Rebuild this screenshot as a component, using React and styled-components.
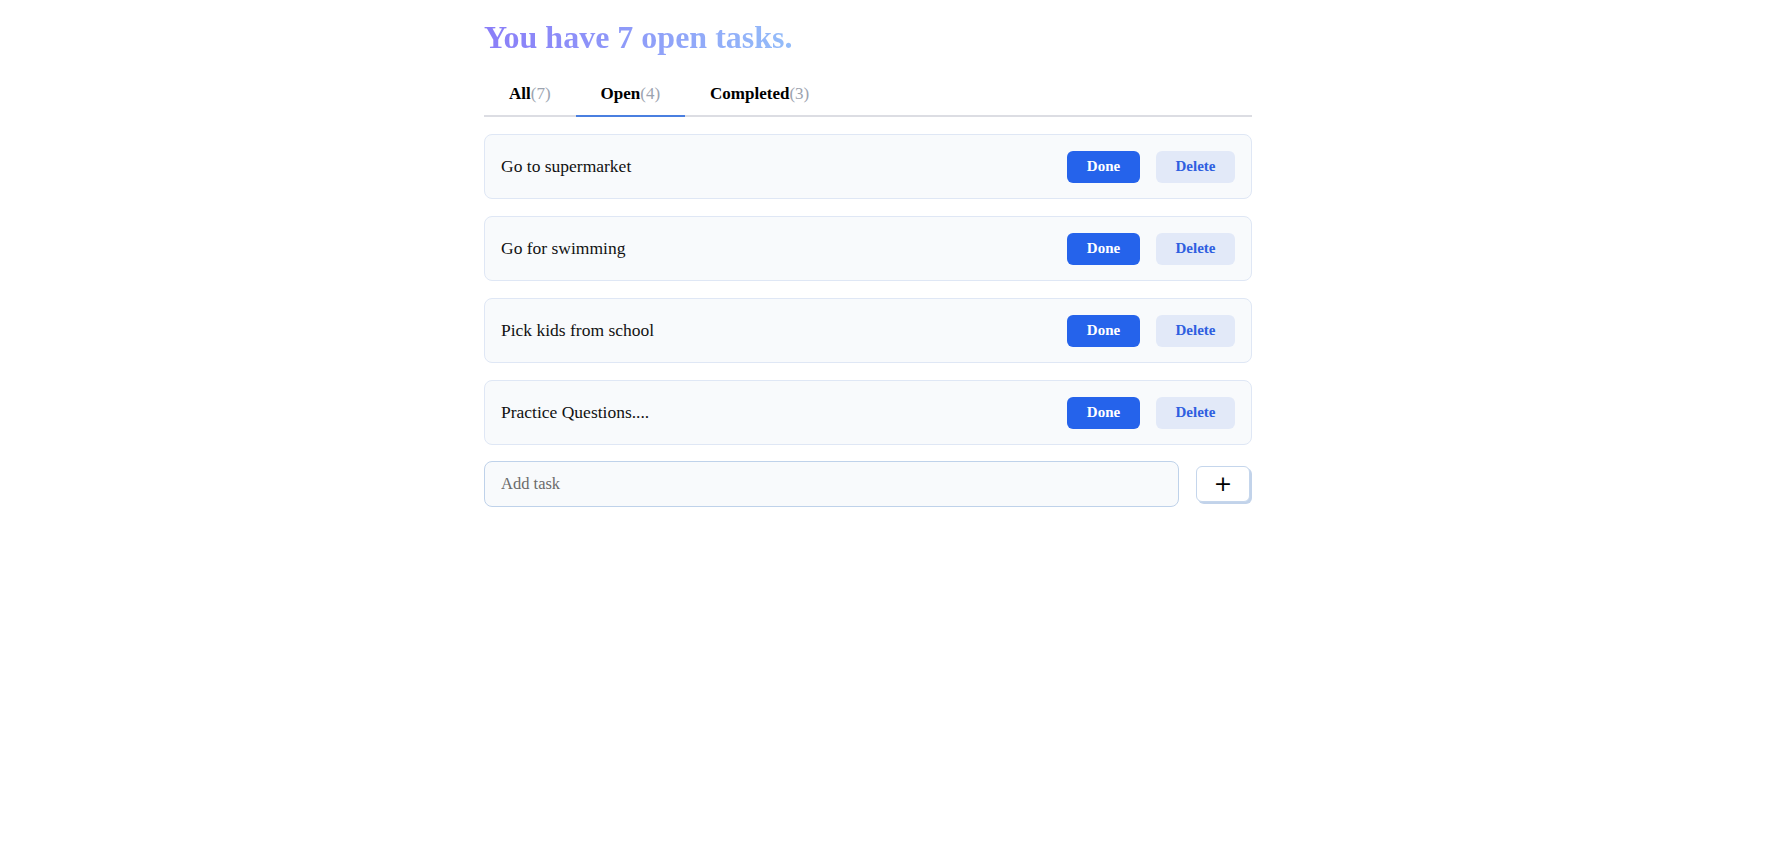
import React, { useState } from 'react'
import styled, { createGlobalStyle } from 'styled-components'

const GlobalStyle = createGlobalStyle`
  body {
    margin: 0;
    background: #ffffff;
    font-family: "Liberation Serif", "DejaVu Serif", serif;
    color: #111111;
  }
`

const Wrapper = styled.div`
  width: 768px;
  margin-left: 484px;
  padding-top: 17px;
`

const Title = styled.h1`
  margin: 0 0 19px;
  font-size: 32px;
  font-weight: 700;
  line-height: 40px;
  background: linear-gradient(to right, #8a7df8, #94bdf9);
  -webkit-background-clip: text;
  background-clip: text;
  color: transparent;
  display: inline-block;
`

const Tabs = styled.div`
  display: flex;
  border-bottom: 2px solid #dcdde3;
  margin-bottom: 17px;
`

const Tab = styled.button`
  border: none;
  background: none;
  padding: 8px 25px 11px;
  margin-bottom: -2px;
  border-bottom: 2px solid ${p => (p.$active ? '#4a7fe0' : 'transparent')};
  font-family: inherit;
  font-size: 17px;
  font-weight: 700;
  color: #000;
  cursor: pointer;
`

const Count = styled.span`
  font-weight: 400;
  color: #9ca3af;
`

const List = styled.div`
  display: flex;
  flex-direction: column;
  gap: 17px;
`

const Card = styled.div`
  display: flex;
  align-items: center;
  height: 65px;
  box-sizing: border-box;
  padding: 0 16px;
  border: 1px solid #dfe7f5;
  border-radius: 8px;
  background: #f8fafc;
`

const TaskText = styled.span`
  flex: 1;
  font-size: 17.5px;
  color: #111;
`

const Button = styled.button`
  height: 32px;
  border: none;
  border-radius: 6px;
  font-family: inherit;
  font-size: 15px;
  font-weight: 700;
  cursor: pointer;
  width: ${p => (p.$variant === 'done' ? '73px' : '79px')};
  margin-left: ${p => (p.$variant === 'done' ? '0' : '16px')};
  background: ${p => (p.$variant === 'done' ? '#2563eb' : '#e2e9f8')};
  color: ${p => (p.$variant === 'done' ? '#ffffff' : '#2f5fe0')};
`

const AddRow = styled.form`
  display: flex;
  align-items: center;
  gap: 17px;
  margin-top: 16px;
`

const Input = styled.input`
  flex: 1;
  height: 46px;
  box-sizing: border-box;
  padding: 0 16px;
  border: 1px solid #bfd2ea;
  border-radius: 8px;
  background: #f8fafc;
  font-family: inherit;
  font-size: 16.5px;
  outline: none;
  &::placeholder {
    color: #6b6b6b;
  }
`

const AddButton = styled.button`
  width: 54px;
  height: 36px;
  margin-right: 2px;
  border: 1px solid #c5d6ec;
  border-radius: 6px;
  background: #fff;
  box-shadow: 2px 2px 0 #c2d3ea;
  font-family: "DejaVu Sans", sans-serif;
  font-size: 22px;
  line-height: 1;
  color: #000;
  cursor: pointer;
`

const tasks = [
  'Go to supermarket',
  'Go for swimming',
  'Pick kids from school',
  'Practice Questions....',
]

export default function App() {
  const [active, setActive] = useState('open')
  return (
    <>
      <GlobalStyle />
      <Wrapper>
        <Title>You have 7 open tasks.</Title>
        <Tabs>
          <Tab $active={active === 'all'} onClick={() => setActive('all')}>
            All<Count>(7)</Count>
          </Tab>
          <Tab $active={active === 'open'} onClick={() => setActive('open')}>
            Open<Count>(4)</Count>
          </Tab>
          <Tab $active={active === 'completed'} onClick={() => setActive('completed')}>
            Completed<Count>(3)</Count>
          </Tab>
        </Tabs>
        <List>
          {tasks.map(t => (
            <Card key={t}>
              <TaskText>{t}</TaskText>
              <Button $variant="done">Done</Button>
              <Button $variant="delete">Delete</Button>
            </Card>
          ))}
        </List>
        <AddRow onSubmit={e => e.preventDefault()}>
          <Input placeholder="Add task" />
          <AddButton type="submit">+</AddButton>
        </AddRow>
      </Wrapper>
    </>
  )
}
